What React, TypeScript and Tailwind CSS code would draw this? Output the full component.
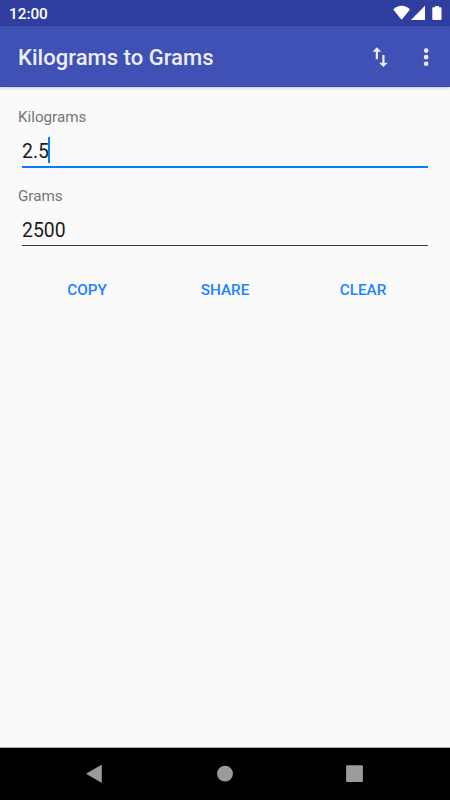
import { useState } from "react";

function StatusBar() {
  return (
    <div className="flex h-[26px] items-center justify-between bg-[#303f9f] pl-[9px] pr-2 text-white">
      <span className="pt-[2px] text-[15.3px] leading-[18px] font-medium">12:00</span>
      <svg width="49" height="26" viewBox="0 0 49 26" fill="currentColor">
        {/* wifi */}
        <path d="M0.2 9.6C4.9 4.6 12.3 4.6 17 9.6L8.6 19.8z" />
        {/* signal */}
        <path d="M32 5.7V19.9H17.9z" />
        {/* battery */}
        <path d="M41.9 6h4v1.3h1.6q1 0 1 1V19q0 1-1 1h-7.2q-1 0-1-1V8.3q0-1 1-1h1.6z" />
      </svg>
    </div>
  );
}

function AppBar() {
  return (
    <header className="z-10 flex h-[61px] items-center border-b border-[#3549b8] bg-[#3f51b5] pl-[18px] pr-[11px] text-[#ecedf8] shadow-[0_1px_3px_rgba(0,0,0,0.2)]">
      <h1 className="pt-1 text-[22px] leading-7 font-medium tracking-[0.03px]">Kilograms to Grams</h1>
      <button className="ml-auto pt-[2px]" aria-label="Swap units">
        <svg width="26.3" height="26.3" viewBox="0 0 24 24" fill="currentColor">
          <path d="M16 17.01V10h-2v7.01h-3L15 21l4-3.99h-3zM9 3L5 6.99h3V14h2V6.99h3L9 3z" />
        </svg>
      </button>
      <button className="ml-[19.5px] pt-[2px]" aria-label="More options">
        <svg width="26.3" height="26.3" viewBox="0 0 24 24" fill="currentColor">
          <circle cx="12" cy="6" r="2.1" />
          <circle cx="12" cy="12" r="2.1" />
          <circle cx="12" cy="18" r="2.1" />
        </svg>
      </button>
    </header>
  );
}

interface FieldProps {
  label: string;
  value: string;
  active?: boolean;
}

function Field({ label, value, active }: FieldProps) {
  return (
    <div className="flex h-[79px] flex-col">
      <span className="pt-px text-[15.2px] leading-[18px] text-[#757575]">{label}</span>
      <div
        className={
          active
            ? "mx-1 mt-[9px] flex h-[33px] items-start border-b-2 border-[#0a7aff] pt-[2px]"
            : "mx-1 mt-[9px] flex h-[32px] items-start border-b border-[#3c3c3c] pt-[2px]"
        }
      >
        <span className="pt-[3px] text-[19.4px] leading-6 text-[#1a1a1a]">{value}</span>
        {active && <span className="-ml-[0.5px] h-[26px] w-[2px] bg-[#0a7aff]" />}
      </div>
    </div>
  );
}

function NavBar() {
  return (
    <nav className="flex h-[53px] border-t border-[#a5a5a5] bg-black">
      <svg width="450" height="52" viewBox="0 748 450 52" fill="#9b9b9b">
        <path d="M86 773.8L101 765.1Q101.8 764.8 101.8 765.6V782.2Q101.8 783 101 782.6z" />
        <circle cx="225" cy="773.7" r="7.9" />
        <rect x="346.1" y="765.2" width="16.8" height="16.8" rx="1" />
      </svg>
    </nav>
  );
}

export default function App() {
  const [kilograms] = useState("2.5");
  const grams = String(Number(kilograms) * 1000);

  return (
    <div className="flex h-[800px] w-[450px] flex-col overflow-hidden bg-[#fafafa] font-[Roboto,sans-serif]">
      <StatusBar />
      <AppBar />
      <main className="flex-1 px-[18px] pt-5">
        <Field label="Kilograms" value={kilograms} active />
        <Field label="Grams" value={grams} />
        <div className="grid grid-cols-3 text-[15.3px] font-medium text-[#1f82ff]">
          <button className="h-[50px]">COPY</button>
          <button className="h-[50px]">SHARE</button>
          <button className="h-[50px]">CLEAR</button>
        </div>
      </main>
      <NavBar />
    </div>
  );
}
